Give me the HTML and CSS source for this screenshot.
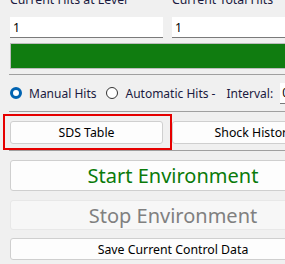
FILE: index.html
```html
<!DOCTYPE html>
<html lang="en">
<head>
  <meta charset="UTF-8" />
  <title>Control Panel</title>
  <link rel="stylesheet" href="styles.css">
</head>
<body>

  <div class="panel">
    <!-- Counters -->
    <div class="counters">
      <div class="field">
        <label>Current Hits at Level</label>
        <input type="text" class="box" value="1" readonly />
      </div>
      <div class="field">
        <label>Current Total Hits</label>
        <input type="text" class="box" value="1" readonly />
      </div>
    </div>

    <div class="progress"><div class="fill"></div></div>

    <div class="sep"></div>

    <!-- Mode -->
    <div class="mode">
      <label class="radio"><span class="dot on"></span>Manual Hits</label>
      <label class="radio"><span class="dot"></span>Automatic Hits -</label>
      <span class="interval">Interval:</span>
      <input type="text" class="box small" value="0" readonly />
    </div>

    <div class="sep"></div>

    <div class="tables">
      <button class="btn highlight">SDS Table</button>
      <button class="btn">Shock History</button>
    </div>

    <div class="sep"></div>

    <button class="btn big start">Start Environment</button>
    <button class="btn big stop" disabled>Stop Environment</button>
    <button class="btn save">Save Current Control Data</button>
  </div>

</body>
</html>
```

FILE: styles.css
```css
body {
  margin: 0;
  background: #f0f0f0;
  font-family: "Segoe UI", "Noto Sans", Arial, sans-serif;
  font-size: 12.3px;
  color: #000;
  overflow: hidden;
}

.panel {
  width: 340px;
  padding-left: 10px;
  margin-top: -9px;
  display: flex;
  flex-direction: column;
  align-items: flex-start;
}

.counters {
  display: grid;
  grid-template-columns: 153px 153px;
  gap: 9px;
}

.field label {
  display: block;
  height: 18px;
  line-height: 18px;
  color: #1a1a40;
  margin-bottom: 8px;
}

.box {
  box-sizing: border-box;
  display: block;
  width: 100%;
  height: 21px;
  border: none;
  border-bottom: 1px solid #7a7a7a;
  background: #fff;
  font: inherit;
  padding: 0 3px;
  color: #000;
}

.progress {
  box-sizing: border-box;
  width: 340px;
  margin-top: 5px;
  height: 26px;
  border: 1px solid #bcbcbc;
  background: #e6e6e6;
}

.fill {
  height: 100%;
  background: #107c10;
}

.sep {
  width: 340px;
  height: 1px;
  background: #a0a0a0;
  margin-left: -1px;
}

.progress + .sep {
  margin-top: 5px;
}

.mode {
  box-sizing: border-box;
  display: flex;
  align-items: center;
  height: 36px;
  white-space: nowrap;
  font-size: 12px;
}

.radio {
  display: flex;
  align-items: center;
  gap: 7px;
  margin-right: 10px;
  color: #1a1a40;
}

.dot {
  box-sizing: border-box;
  width: 12px;
  height: 12px;
  border: 1px solid #333;
  border-radius: 50%;
  background: #fff;
}

.dot.on {
  border: 3px solid #0063b1;
}

.interval {
  margin-left: 1px;
  margin-right: 7px;
  color: #1a1a40;
}

.box.small {
  width: 40px;
  flex: none;
  padding: 0 2px;
}

.tables {
  display: grid;
  grid-template-columns: 153px 164px;
  gap: 9px;
  padding: 9px 0 6px;
}

.btn {
  box-sizing: border-box;
  width: 326px;
  height: 23px;
  border: 1px solid #cfcfcf;
  border-radius: 3px;
  background: #fdfdfd;
  font: inherit;
  color: #000;
  padding: 0;
}

.tables .btn {
  width: auto;
}

.highlight {
  position: relative;
}

.highlight::after {
  content: "";
  position: absolute;
  top: -8px;
  left: -8px;
  right: -10px;
  bottom: -7px;
  border: 2px solid #e60000;
}

.big {
  font-size: 20px;
  height: 31px;
}

.start {
  margin-top: 9px;
  color: #0a7a0a;
}

.stop {
  margin-top: 9px;
  height: 30px;
  background: #f7f7f7;
  border-color: #e8e8e8;
  color: #808080;
}

.save {
  margin-top: 8px;
  height: 22px;
}
```
